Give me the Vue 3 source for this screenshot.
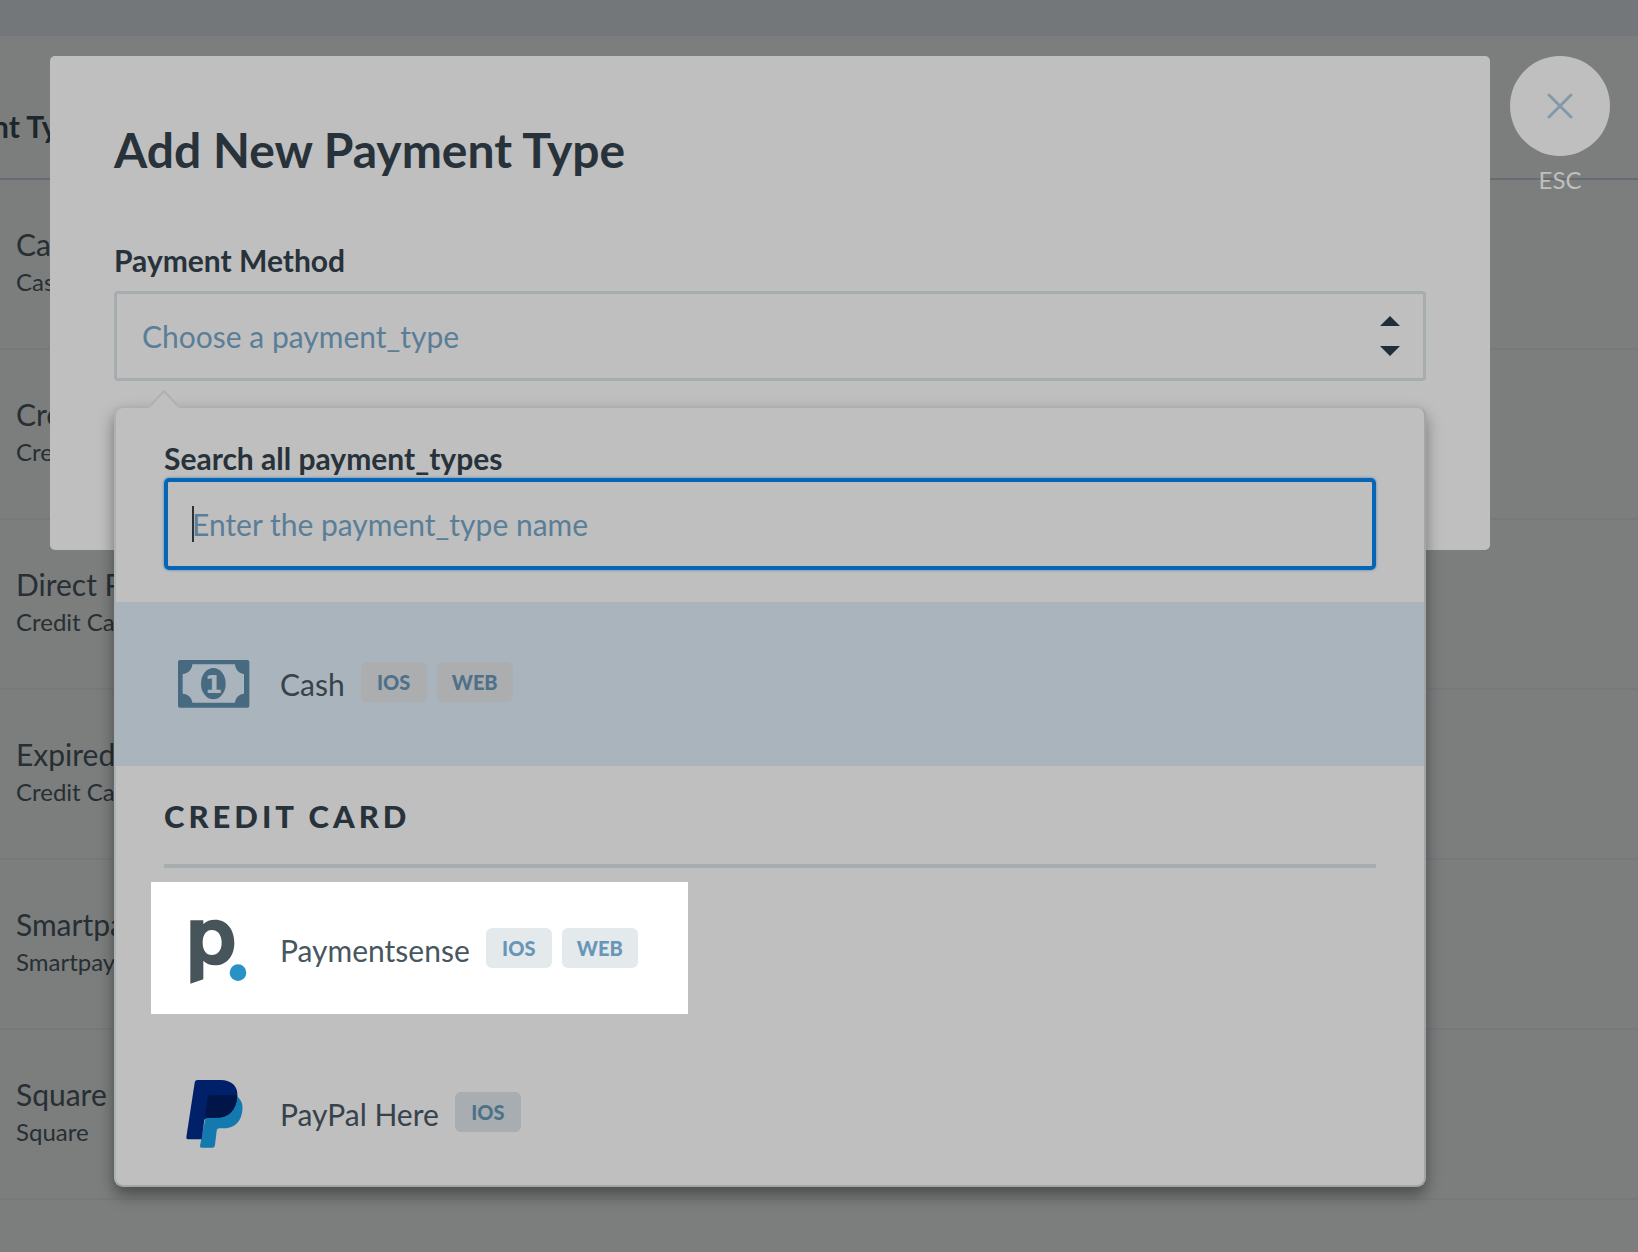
<script setup>
const rows = [
  { name: 'Cash', kind: 'Cash' },
  { name: 'Credit Card', kind: 'Credit Card' },
  { name: 'Direct Payment', kind: 'Credit Card' },
  { name: 'Expired', kind: 'Credit Card' },
  { name: 'Smartpay', kind: 'Smartpay' },
  { name: 'Square', kind: 'Square' },
]
</script>

<template>
  <div class="page">
    <div class="topbar"></div>
    <table class="types">
      <thead>
        <tr><th scope="col">nt Type</th></tr>
      </thead>
      <tbody>
        <tr v-for="row in rows" :key="row.name">
          <td>
            <div class="name">{{ row.name }}</div>
            <div class="kind">{{ row.kind }}</div>
          </td>
        </tr>
      </tbody>
    </table>

    <div class="overlay">
      <section class="modal" role="dialog" aria-labelledby="modal-title">
        <h1 id="modal-title">Add New Payment Type</h1>
        <label class="field-label" for="method">Payment Method</label>
        <div class="picker">
          <select id="method" class="select">
            <option>Choose a payment_type</option>
          </select>
          <svg class="arrows" viewBox="0 0 20 40" aria-hidden="true">
            <path d="M0 10 10 0 20 10ZM0 30 10 40 20 30Z" fill="#1f2e38" />
          </svg>

          <div class="dropdown">
            <svg class="notch" viewBox="0 0 30 18" aria-hidden="true">
              <path d="M0 18 15 1 30 18Z" fill="#bfbfbf" />
              <path d="M1 16 15 1 29 16" fill="none" stroke="#acb1b3" stroke-width="2" />
            </svg>
            <div class="search">
              <label for="search">Search all payment_types</label>
              <div class="search-box">
                <input id="search" type="text" placeholder="Enter the payment_type name" />
                <span class="caret"></span>
              </div>
            </div>

            <div class="options">
              <button type="button" class="option active">
                <span class="option-body">
                  <svg class="icon" viewBox="54 24 216 216" aria-hidden="true">
                    <rect x="54" y="60" width="214" height="143" rx="6" fill="#486a80" />
                    <path d="M97 73H225C226 90 238 101 252 102V161C238 162 226 173 225 188H97C96 173 84 162 68 161V102C84 101 96 90 97 73Z" fill="#aab4bd" />
                    <ellipse cx="160" cy="131" rx="37" ry="47" fill="#486a80" />
                    <text x="161" y="159" text-anchor="middle" class="bill-number">1</text>
                  </svg>
                  <span class="option-name">Cash</span>
                  <span class="tag">IOS</span>
                  <span class="tag wide">WEB</span>
                </span>
              </button>

              <h2>Credit Card</h2>

              <button type="button" class="option">
                <span class="option-body spotlight">
                  <svg class="icon" viewBox="54 72 216 216" aria-hidden="true">
                    <path fill-rule="evenodd" fill="#47545a" d="M91 91H130V102C139 93 150 89 165 89C201 89 223 119 223 158C223 198 200 226 165 226C150 226 139 221 130 212V268L91 281ZM155 120C139 120 128 134 128 158C128 181 139 195 155 195C173 195 185 181 185 158C185 134 173 120 155 120Z" />
                    <circle cx="234" cy="248" r="25" fill="#2a91c5" />
                  </svg>
                  <span class="option-name">Paymentsense</span>
                  <span class="tag">IOS</span>
                  <span class="tag wide">WEB</span>
                </span>
              </button>

              <button type="button" class="option">
                <span class="option-body">
                  <svg class="icon" viewBox="54 564 216 216" aria-hidden="true">
                    <path fill="#1479ae" d="M150 616H226C242 625 250 642 247 662C243 697 222 715 189 715H178Q171 715 170 722L165 764Q164 773 157 773H125Q119 773 120 767Z" />
                    <path fill="#01206a" d="M113 570H181C216 570 235 590 232 620C228 661 206 683 170 683H143Q134 683 133 691L125 748H84Q78 748 79 742L104 578Q105 570 113 570Z" />
                    <path fill="#011548" d="M150 616H232C230 660 207 683 170 683H143Q136 683 134 689L143 622Q144 616 150 616Z" />
                  </svg>
                  <span class="option-name">PayPal Here</span>
                  <span class="tag">IOS</span>
                </span>
              </button>
            </div>
          </div>
        </div>
      </section>

      <div class="close">
        <button type="button" aria-label="Close">
          <svg viewBox="0 0 26 26" aria-hidden="true">
            <path d="M2 2 24 24M24 2 2 24" stroke="#8299a7" stroke-width="3" stroke-linecap="round" />
          </svg>
        </button>
        <span>ESC</span>
      </div>
    </div>
  </div>
</template>

<style>
body {
  margin: 0;
  background: #7b7e7c;
}
</style>

<style scoped>
.page,
.page * {
  box-sizing: border-box;
}

.page {
  position: relative;
  min-height: 100vh;
  overflow: hidden;
  background: #7b7e7c;
  color: #27323a;
  font-family: Lato, "Liberation Sans", sans-serif;
  font-size: 30px;
  line-height: 40px;
  text-rendering: optimizeLegibility;
}

button,
input,
select {
  margin: 0;
  font: inherit;
  color: inherit;
  text-rendering: inherit;
}

.topbar {
  height: 36px;
  background: #747779;
}

.types {
  width: 100%;
  border-collapse: separate;
  border-spacing: 0;
  color: #272f35;
  text-align: left;
}

.types th {
  height: 144px;
  padding: 38px 0 0;
  border-bottom: 2px solid #666d72;
  vertical-align: middle;
  color: #1c262d;
  font-weight: 700;
  text-indent: -8px;
}

.types td {
  height: 170px;
  padding: 44px 16px 0;
  border-bottom: 2px solid #75797d;
  vertical-align: top;
}

.kind {
  font-size: 24px;
  line-height: 36px;
}

.overlay {
  position: absolute;
  inset: 0;
  display: flex;
  align-items: flex-start;
  gap: 20px;
  padding: 56px 28px 0 50px;
}

.modal {
  flex: 1;
  min-width: 0;
  padding: 62px 64px 169px;
  border-radius: 5px;
  background: #bfbfbf;
}

h1 {
  margin: 0 0 58px;
  font-size: 48px;
  font-weight: 700;
  line-height: 64px;
}

.field-label {
  display: block;
  margin-bottom: 11px;
  font-weight: 700;
}

.picker {
  position: relative;
}

.select {
  display: block;
  width: 100%;
  height: 90px;
  padding: 0 72px 0 25px;
  appearance: none;
  border: 3px solid #a6adaf;
  border-radius: 4px;
  background: transparent;
  color: #5a7e97;
}

.arrows {
  position: absolute;
  top: 25px;
  right: 26px;
  width: 20px;
  height: 40px;
}

.dropdown {
  position: absolute;
  top: 115px;
  left: 0;
  right: 0;
  border: 2px solid #acb1b3;
  border-right-color: #a3a6a8;
  border-bottom-color: #a3a6a8;
  border-radius: 9px;
  background: #bfbfbf;
  box-shadow: 0 8px 16px rgba(0, 0, 0, 0.4);
}

.notch {
  position: absolute;
  top: -18px;
  left: 33px;
  width: 30px;
  height: 18px;
}

.search {
  padding: 30px 48px 32px;
}

.search label {
  display: block;
  font-weight: 700;
}

.search-box {
  position: relative;
}

.search input {
  display: block;
  width: 100%;
  height: 92px;
  padding: 0 24px;
  border: 4px solid #0665b5;
  border-radius: 5px;
  background: transparent;
  box-shadow: 0 0 3px #4d86b5;
}

.search input::placeholder {
  color: #5a7e97;
  opacity: 1;
}

.caret {
  position: absolute;
  top: 28px;
  left: 28px;
  width: 2px;
  height: 36px;
  background: #27323a;
}

.options {
  max-height: 583px;
  overflow: hidden;
  border-radius: 0 0 7px 7px;
}

.option {
  display: flex;
  align-items: flex-start;
  width: 100%;
  height: 164px;
  padding: 14px 35px 0;
  border: 0;
  background: transparent;
  color: #36434c;
  text-align: left;
}

.option.active {
  background: #aab4bd;
}

.option-body {
  display: flex;
  align-items: center;
  height: 132px;
  padding: 4px 50px 0 27px;
}

.spotlight {
  background: #ffffff;
  color: #47565f;
}

.icon {
  width: 72px;
  height: 72px;
  margin-right: 30px;
}

.bill-number {
  fill: #aab4bd;
  font-family: "DejaVu Sans", sans-serif;
  font-size: 76px;
  font-weight: 700;
}

.option-name {
  margin-right: 16px;
}

.tag {
  width: 66px;
  margin: 0 10px 4px 0;
  border-radius: 6px;
  background: #a8adb1;
  color: #4e7189;
  font-size: 20px;
  font-weight: 900;
  text-align: center;
}

.tag.wide {
  width: 76px;
}

.tag:last-child {
  margin-right: 0;
}

.active .tag {
  background: #abadaf;
}

.spotlight .tag {
  background: #e4e9ec;
  color: #6796b6;
}

h2 {
  margin: 0 48px;
  padding: 30px 0 28px;
  border-bottom: 4px solid #a7adaf;
  font-size: 31px;
  font-weight: 900;
  letter-spacing: 4px;
  text-transform: uppercase;
}

.close {
  display: flex;
  flex-direction: column;
  align-items: center;
  gap: 4px;
  color: #bfbfbf;
  font-size: 24px;
}

.close button {
  display: grid;
  place-items: center;
  width: 100px;
  height: 100px;
  padding: 0;
  border: 0;
  border-radius: 50%;
  background: #bfbfbf;
}

.close svg {
  width: 26px;
  height: 26px;
}
</style>
